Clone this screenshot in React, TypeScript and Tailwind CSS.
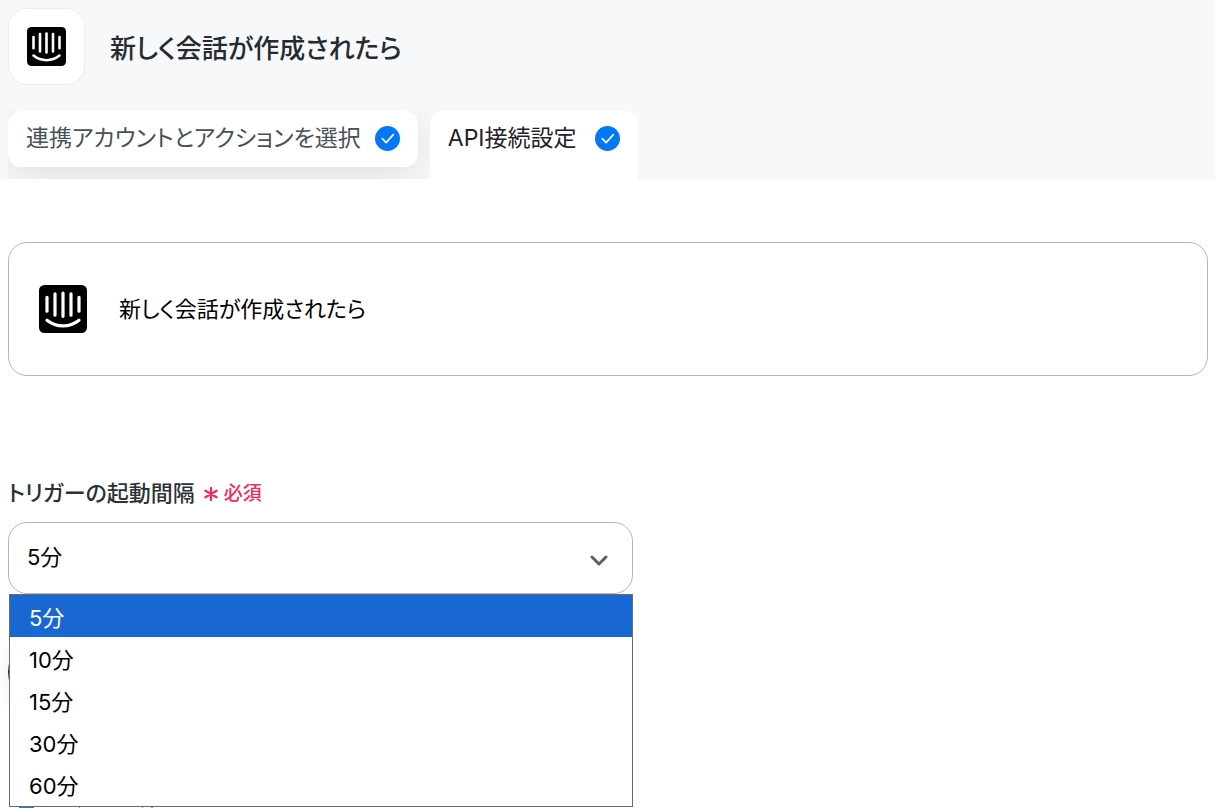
import { useState } from "react";

const intervals = ["5分", "10分", "15分", "30分", "60分"];

function IntercomLogo({ className }: { className: string }) {
  return (
    <svg viewBox="0 0 48 48" className={className} aria-hidden="true">
      <rect width="48" height="48" rx="5.5" fill="#000" />
      <g stroke="#fff" strokeWidth="3.2" strokeLinecap="round" fill="none">
        <path d="M8 12.3v13.9M16 8.8v21.4M24 8v23.3M32 8.8v21.4M40 12.3v13.9" />
        <path d="M8 35.2c9.6 7.6 22.4 7.6 32 0" />
      </g>
    </svg>
  );
}

function CheckBadge() {
  return (
    <svg viewBox="0 0 25 25" className="size-[25px] shrink-0" aria-hidden="true">
      <circle cx="12.5" cy="12.5" r="12.5" fill="#0378f4" />
      <path d="M7.3 12.6l3.8 4L18.3 8.6" fill="none" stroke="#fff" strokeWidth="1.6" strokeLinecap="round" strokeLinejoin="round" />
    </svg>
  );
}

export default function App() {
  const [interval, setIntervalValue] = useState("5分");

  return (
    <div className="overflow-hidden bg-white font-['Inter','Noto_Sans_CJK_JP',sans-serif] text-[22px] leading-8 text-black [font-feature-settings:'palt']">
      <header className="bg-[#f6f8fa] px-2 pt-2">
        <div className="flex items-center gap-[25px]">
          <div className="flex size-[77px] items-center justify-center rounded-[19px] border border-[#eaeef2] bg-white">
            <IntercomLogo className="size-[39px]" />
          </div>
          <h1 className="pt-1 text-[26px] font-medium leading-10 text-[#252b31]">新しく会話が作成されたら</h1>
        </div>
        <nav className="mt-[26px] flex w-fit items-start gap-3 overflow-hidden text-[23px]">
          <button type="button" className="flex h-14 items-center gap-[14px] rounded-[13px] bg-white px-[18px] pb-0.5 text-[#48515a] shadow-[0_8px_40px_rgba(0,0,0,0.10)]">
            連携アカウントとアクションを選択
            <CheckBadge />
          </button>
          <button type="button" className="relative flex h-[68px] items-center gap-[18px] rounded-t-[13px] bg-white px-[18px] pb-[14px] text-[#1d2227]" aria-current="step">
            API接続設定
            <CheckBadge />
          </button>
        </nav>
      </header>

      <main className="px-2 pt-[63px]">
        <section className="mr-[-1px] flex h-[134px] items-center gap-8 rounded-[19px] border border-[#afb8c1] px-[30px]">
          <IntercomLogo className="size-12" />
          <p>新しく会話が作成されたら</p>
        </section>

        <div className="mt-[100px] w-[625px] max-w-full">
          <div className="flex items-center gap-[9px]">
            <label htmlFor="interval" className="font-medium text-[#2b3138]">
              トリガーの起動間隔
            </label>
            <span className="flex items-center gap-[6px] pt-0.5 text-[19px] font-medium text-[#f42a5c]">
              <svg viewBox="0 0 14 14" className="size-[14px]" aria-hidden="true">
                <path d="M7 1v12M1.4 3.8l11.2 6.4M12.6 3.8L1.4 10.2" stroke="currentColor" strokeWidth="2.3" strokeLinecap="round" />
              </svg>
              必須
            </span>
          </div>
          <div className="relative mt-3">
            <select
              id="interval"
              value={interval}
              onChange={(e) => setIntervalValue(e.target.value)}
              className="block h-[72px] w-full appearance-none rounded-[19px] border border-[#afb8c1] bg-white px-[18px] pb-0.5 outline-none"
            >
              {intervals.map((v) => (
                <option key={v}>{v}</option>
              ))}
            </select>
            <svg viewBox="0 0 18 12" className="pointer-events-none absolute right-[25px] top-[33px] h-3 w-[18px]" aria-hidden="true">
              <path d="M2 2l7 7 7-7" fill="none" stroke="#57606a" strokeWidth="3" strokeLinecap="round" strokeLinejoin="round" />
            </svg>
            <ul role="listbox" aria-label="トリガーの起動間隔" className="absolute left-px right-0 top-full z-10 border border-[#6b6b6b] bg-white pb-px">
              {intervals.map((v) => (
                <li
                  key={v}
                  role="option"
                  aria-selected={v === interval}
                  onClick={() => setIntervalValue(v)}
                  className="flex h-[42px] items-center px-[19px] pt-1 aria-selected:bg-[#1967d2] aria-selected:text-white"
                >
                  {v}
                </li>
              ))}
            </ul>
          </div>
          <div className="mt-[42px] h-[72px] w-[200px] rounded-full bg-[#24292f] shadow-[0_4px_26px_rgba(0,0,0,0.08)]" />
          <svg viewBox="0 0 160 1" className="mt-[99px] h-px w-40" aria-hidden="true">
            <path d="M11 0h15v1H11z" fill="#2878d8" />
            <path d="M71 0h1v1h-1zM134 0h1v1h-1zM143 0h2v1h-2z" fill="#9a9a9a" />
          </svg>
        </div>
      </main>
    </div>
  );
}
